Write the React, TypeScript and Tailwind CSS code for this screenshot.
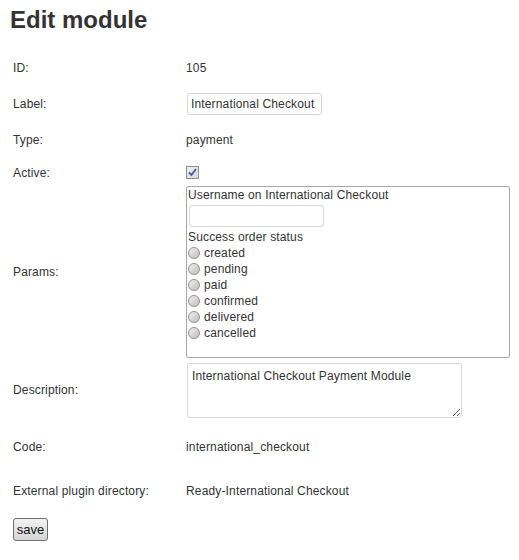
const statuses = ["created", "pending", "paid", "confirmed", "delivered", "cancelled"];

function Row({ label, className, children }: { label: string; className: string; children?: React.ReactNode }) {
  return (
    <div className={`flex items-center ${className}`}>
      <div className="w-[186px] shrink-0 pl-[13px]">{label}</div>
      <div className="flex-1">{children}</div>
    </div>
  );
}

function Radio() {
  return (
    <span className="inline-block w-[12px] h-[12px] mr-[4px] rounded-full border border-[#939393] bg-gradient-to-br from-[#f0f0f0] to-[#bdbdbd] shrink-0" />
  );
}

export default function App() {
  return (
    <div className="min-h-[560px] bg-white text-[#333] text-[12px] leading-[16px] tracking-[0.15px] font-['Liberation_Sans',Arial,sans-serif]">
      <h1 className="pt-[6px] pl-[10px] h-[50px] text-[24px] leading-[28px] tracking-normal font-bold text-[#333]">Edit module</h1>

      <Row label="ID:" className="h-[36px]">105</Row>

      <Row label="Label:" className="h-[36px]">
        <input
          defaultValue="International Checkout"
          className="w-[135px] h-[22px] ml-[1px] px-[3px] border border-[#d4d4d4] rounded-[3px] text-[12px] tracking-[0.15px] text-[#333] outline-none"
        />
      </Row>

      <Row label="Type:" className="h-[36px]">payment</Row>

      <Row label="Active:" className="h-[25px] mt-[2px]">
        <span className="flex items-center justify-center w-[13px] h-[13px] border border-[#8e8f8f] bg-gradient-to-br from-[#f0f0f0] to-[#d8d8d8]">
          <svg width="9" height="9" viewBox="0 0 9 9">
            <path d="M1 4.5 L3.5 7 L8 1" fill="none" stroke="#4557a6" strokeWidth="1.8" />
          </svg>
        </span>
      </Row>

      <Row label="Params:" className="h-[174px]">
        <div className="w-[324px] h-[172px] border border-[#a8a8a8] rounded-[2px] pl-[1px]">
          <div>Username on International Checkout</div>
          <input className="mt-[2px] ml-[1px] block w-[135px] h-[22px] border border-[#d9d9d9] rounded-[3px] outline-none" />
          <div className="mt-[2px]">Success order status</div>
          {statuses.map((s) => (
            <div key={s} className="flex items-center h-[16px]">
              <Radio />
              <span>{s}</span>
            </div>
          ))}
        </div>
      </Row>

      <Row label="Description:" className="h-[61px]">
        <textarea
          defaultValue="International Checkout Payment Module"
          className="block ml-[1px] mt-[2px] w-[275px] h-[55px] px-[4px] py-[4px] border border-[#d9d9d9] rounded-[3px] text-[12px] leading-[16px] tracking-[0.15px] text-[#333] outline-none"
        />
      </Row>

      <Row label="Code:" className="h-[54px]">international_checkout</Row>

      <Row label="External plugin directory:" className="h-[34px]">Ready-International Checkout</Row>

      <div className="pl-[13px] pt-[10px]">
        <button className="w-[35px] h-[23px] border border-[#707070] rounded-[3px] bg-gradient-to-b from-[#f2f2f2] to-[#d6d6d6] text-[13px] tracking-normal text-[#111]">
          save
        </button>
      </div>
    </div>
  );
}
